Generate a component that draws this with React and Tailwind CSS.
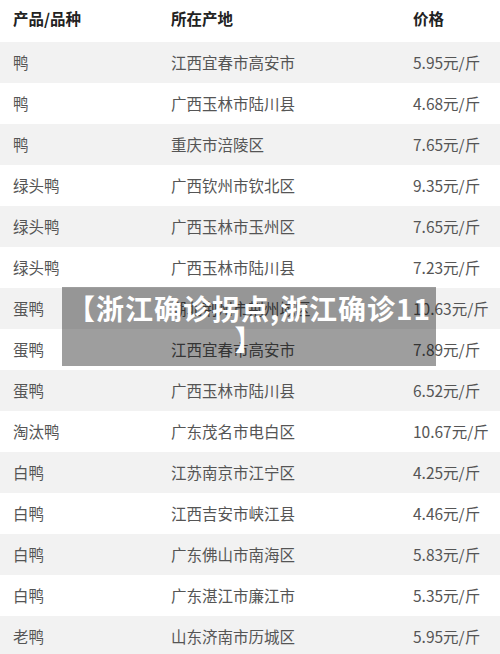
import React from "react";

const rows = [
  ["鸭", "江西宜春市高安市", "5.95元/斤"],
  ["鸭", "广西玉林市陆川县", "4.68元/斤"],
  ["鸭", "重庆市涪陵区", "7.65元/斤"],
  ["绿头鸭", "广西钦州市钦北区", "9.35元/斤"],
  ["绿头鸭", "广西玉林市玉州区", "7.65元/斤"],
  ["绿头鸭", "广西玉林市陆川县", "7.23元/斤"],
  ["蛋鸭", "湖北荆州市荆州城区", "10.63元/斤"],
  ["蛋鸭", "江西宜春市高安市", "7.89元/斤"],
  ["蛋鸭", "广西玉林市陆川县", "6.52元/斤"],
  ["淘汰鸭", "广东茂名市电白区", "10.67元/斤"],
  ["白鸭", "江苏南京市江宁区", "4.25元/斤"],
  ["白鸭", "江西吉安市峡江县", "4.46元/斤"],
  ["白鸭", "广东佛山市南海区", "5.83元/斤"],
  ["白鸭", "广东湛江市廉江市", "5.35元/斤"],
  ["老鸭", "山东济南市历城区", "5.95元/斤"],
];

export default function App() {
  return (
    <div
      className="relative w-[500px] h-[654px] overflow-hidden bg-white"
      style={{ fontFamily: '"Noto Sans CJK SC", "Noto Sans", sans-serif' }}
    >
      <div className="grid grid-cols-[158px_242px_1fr] pl-[13px] h-[42px] items-center pb-[4px] text-[15.5px] font-bold text-[#222]">
        <div>产品/品种</div>
        <div>所在产地</div>
        <div>价格</div>
      </div>
      {rows.map((r, i) => (
        <div
          key={i}
          className={
            "grid grid-cols-[158px_242px_1fr] pl-[13px] h-[41px] items-center text-[15.5px] text-[#555] whitespace-nowrap " +
            (i % 2 === 0 ? "bg-[#f2f2f2]" : "bg-white")
          }
        >
          <div>{r[0]}</div>
          <div>{r[1]}</div>
          <div>{r[2]}</div>
        </div>
      ))}
      <div className="absolute left-[62px] top-[287px] w-[374px] h-[79px] bg-[rgba(0,0,0,0.38)] pt-[6px] text-center text-white font-bold text-[28px] leading-[31px] tracking-[1px] whitespace-nowrap">
        【浙江确诊拐点,浙江确诊11
        <br />】
      </div>
    </div>
  );
}
